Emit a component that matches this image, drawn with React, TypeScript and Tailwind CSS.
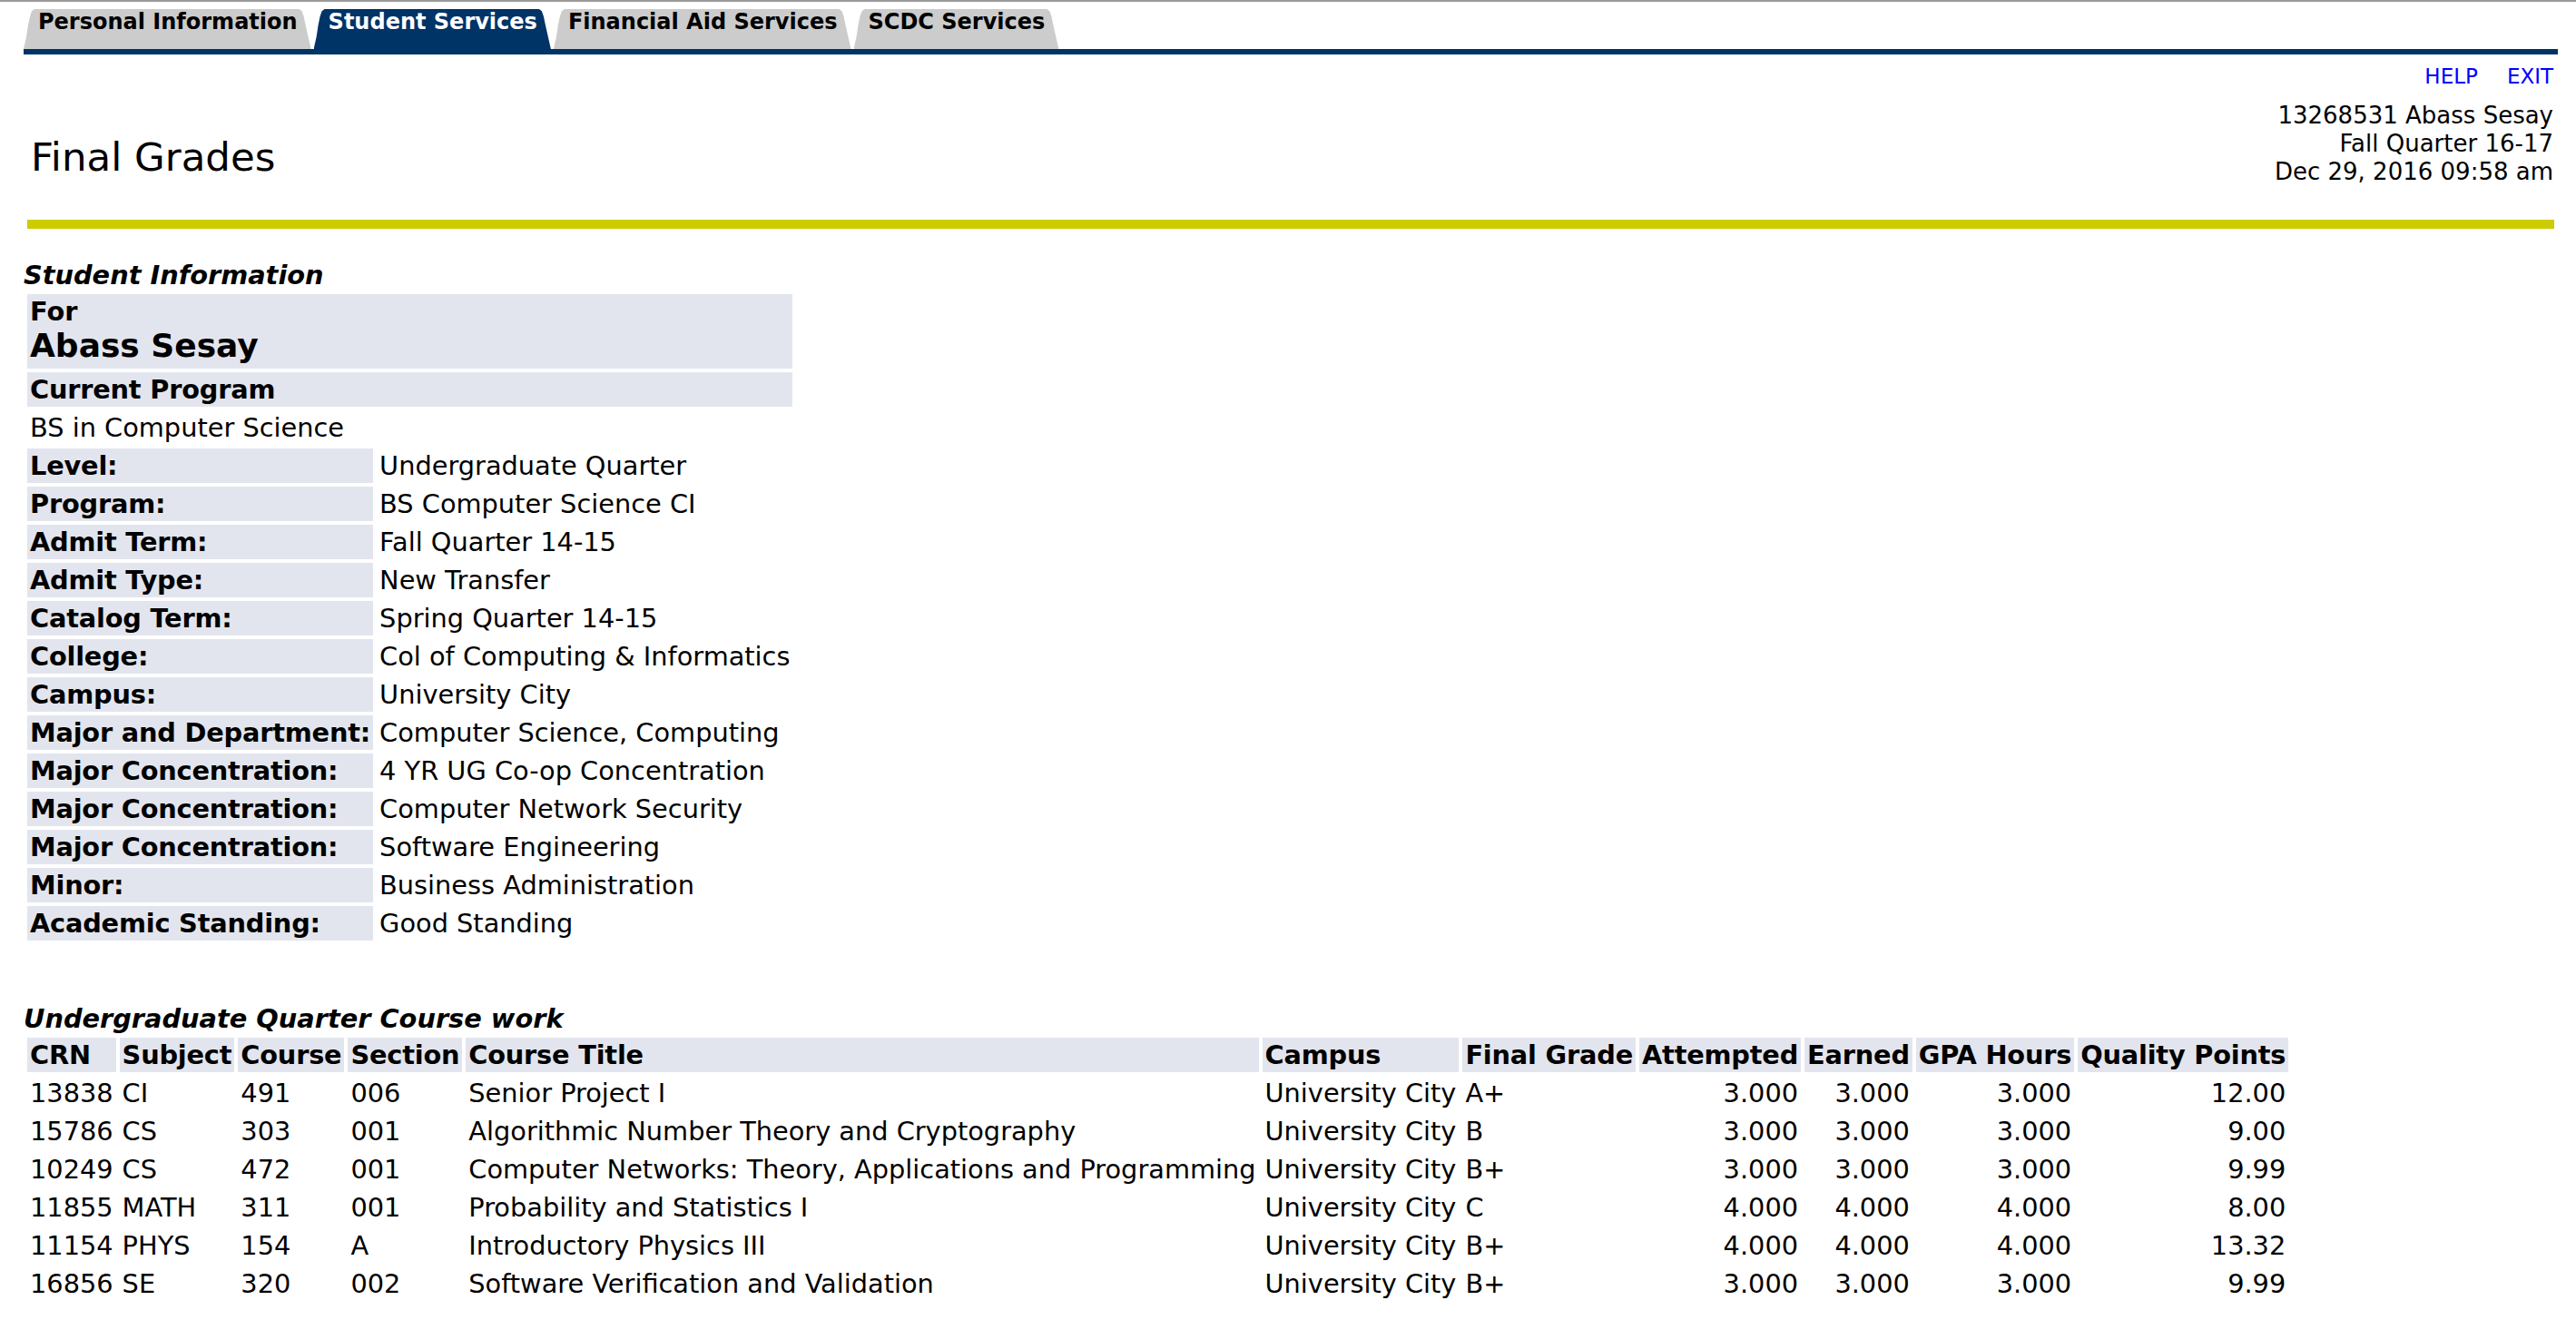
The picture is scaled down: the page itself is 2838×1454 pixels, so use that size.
const TABS = [
  { label: "Personal Information", active: false },
  { label: "Student Services", active: true },
  { label: "Financial Aid Services", active: false },
  { label: "SCDC Services", active: false },
];

const STUDENT_INFO: [string, string][] = [
  ["Level:", "Undergraduate Quarter"],
  ["Program:", "BS Computer Science CI"],
  ["Admit Term:", "Fall Quarter 14-15"],
  ["Admit Type:", "New Transfer"],
  ["Catalog Term:", "Spring Quarter 14-15"],
  ["College:", "Col of Computing & Informatics"],
  ["Campus:", "University City"],
  ["Major and Department:", "Computer Science, Computing"],
  ["Major Concentration:", "4 YR UG Co-op Concentration"],
  ["Major Concentration:", "Computer Network Security"],
  ["Major Concentration:", "Software Engineering"],
  ["Minor:", "Business Administration"],
  ["Academic Standing:", "Good Standing"],
];

type Curso = {
  crn: string;
  subject: string;
  course: string;
  section: string;
  title: string;
  campus: string;
  grade: string;
  attempted: string;
  earned: string;
  gpaHours: string;
  qualityPoints: string;
};

const CURSOS: Curso[] = [
  { crn: "13838", subject: "CI", course: "491", section: "006", title: "Senior Project I", campus: "University City", grade: "A+", attempted: "3.000", earned: "3.000", gpaHours: "3.000", qualityPoints: "12.00" },
  { crn: "15786", subject: "CS", course: "303", section: "001", title: "Algorithmic Number Theory and Cryptography", campus: "University City", grade: "B", attempted: "3.000", earned: "3.000", gpaHours: "3.000", qualityPoints: "9.00" },
  { crn: "10249", subject: "CS", course: "472", section: "001", title: "Computer Networks: Theory, Applications and Programming", campus: "University City", grade: "B+", attempted: "3.000", earned: "3.000", gpaHours: "3.000", qualityPoints: "9.99" },
  { crn: "11855", subject: "MATH", course: "311", section: "001", title: "Probability and Statistics I", campus: "University City", grade: "C", attempted: "4.000", earned: "4.000", gpaHours: "4.000", qualityPoints: "8.00" },
  { crn: "11154", subject: "PHYS", course: "154", section: "A", title: "Introductory Physics III", campus: "University City", grade: "B+", attempted: "4.000", earned: "4.000", gpaHours: "4.000", qualityPoints: "13.32" },
  { crn: "16856", subject: "SE", course: "320", section: "002", title: "Software Verification and Validation", campus: "University City", grade: "B+", attempted: "3.000", earned: "3.000", gpaHours: "3.000", qualityPoints: "9.99" },
];

const CABECALHOS = [
  "CRN",
  "Subject",
  "Course",
  "Section",
  "Course Title",
  "Campus",
  "Final Grade",
  "Attempted",
  "Earned",
  "GPA Hours",
  "Quality Points",
];

const COLUNAS: (keyof Curso)[] = [
  "crn",
  "subject",
  "course",
  "section",
  "title",
  "campus",
  "grade",
  "attempted",
  "earned",
  "gpaHours",
  "qualityPoints",
];

const NUMERICAS = new Set(["attempted", "earned", "gpaHours", "qualityPoints"]);

// células no estilo Banner: fundo lavanda nos rótulos, texto comum nos valores
const celula = "px-[3px] py-[2px] leading-[34px] whitespace-nowrap";
const rotulo = `${celula} bg-[#e3e5ee] font-bold text-left align-top tracking-[-0.2px]`;

function Abas() {
  return (
    <div className="mt-[8px] flex items-end gap-[3px] pl-[26px]">
      {TABS.map((aba) => (
        <div
          key={aba.label}
          className={`h-[44px] pl-[16px] pr-[15px] text-[24px] font-bold leading-[28px] [clip-path:polygon(0_100%,3px_70%,5px_40%,7px_18%,9px_5%,12px_0,calc(100%_-_13px)_0,calc(100%_-_10px)_5%,calc(100%_-_8px)_18%,calc(100%_-_6px)_40%,calc(100%_-_3px)_70%,100%_100%)] ${
            aba.active ? "bg-[#003366] text-white" : "bg-[#cccccc] text-black"
          }`}
        >
          {aba.label}
        </div>
      ))}
    </div>
  );
}

function Cabecalho() {
  return (
    <div className="pl-[26px] pr-[20px]">
      <div className="h-[6px] bg-[#003366]" />
      <div className="mt-[11px] flex justify-end gap-[32px] pr-[5px] text-[23px] leading-[27px] text-[#0000ff]">
        <span>HELP</span>
        <span>EXIT</span>
      </div>
      <div className="flex items-start justify-between">
        <h1 className="mt-[50px] pl-[8px] text-[43.5px] font-normal leading-[51px]">Final Grades</h1>
        <div className="mt-[14px] pr-[5px] text-right text-[26px] leading-[31px]">
          <div>13268531 Abass Sesay</div>
          <div>Fall Quarter 16-17</div>
          <div>Dec 29, 2016 09:58 am</div>
        </div>
      </div>
      <div className="mx-[4px] mt-[37px] h-[10px] bg-[#cccc00]" />
    </div>
  );
}

function InformacaoAluno() {
  return (
    <section className="mt-[34px]">
      <div className="text-[28.8px] font-bold italic leading-[34px]">Student Information</div>
      <table className="border-separate border-spacing-[4px]">
        <tbody>
          <tr>
            <th colSpan={2} className="bg-[#e3e5ee] px-[3px] pt-[2px] pb-[4px] text-left font-bold">
              <div className="leading-[34px]">For</div>
              <div className="text-[36px] leading-[42px]">Abass Sesay</div>
            </th>
          </tr>
          <tr>
            <th colSpan={2} className={rotulo}>
              Current Program
            </th>
          </tr>
          <tr>
            <td colSpan={2} className={celula}>
              BS in Computer Science
            </td>
          </tr>
          {STUDENT_INFO.map(([campo, valor], i) => (
            <tr key={i}>
              <th className={rotulo}>{campo}</th>
              <td className={celula}>{valor}</td>
            </tr>
          ))}
        </tbody>
      </table>
    </section>
  );
}

function CursosTrimestre() {
  return (
    <section className="mt-[65px]">
      <div className="text-[28.8px] font-bold italic leading-[34px]">Undergraduate Quarter Course work</div>
      <table className="border-separate border-spacing-[4px]">
        <thead>
          <tr>
            {CABECALHOS.map((h) => (
              <th key={h} className={rotulo}>
                {h}
              </th>
            ))}
          </tr>
        </thead>
        <tbody>
          {CURSOS.map((c) => (
            <tr key={c.crn}>
              {COLUNAS.map((col) => (
                <td key={col} className={`${celula} ${NUMERICAS.has(col) ? "text-right" : "text-left"}`}>
                  {c[col]}
                </td>
              ))}
            </tr>
          ))}
        </tbody>
      </table>
    </section>
  );
}

export default function App() {
  return (
    <div className="min-h-screen bg-white font-['DejaVu_Sans',Verdana,sans-serif] text-[28.8px] text-black">
      <div className="h-[2px] bg-[#9a9a9a]" />
      <Abas />
      <Cabecalho />
      <div className="pl-[26px] pr-[20px]">
        <InformacaoAluno />
        <CursosTrimestre />
      </div>
    </div>
  );
}
